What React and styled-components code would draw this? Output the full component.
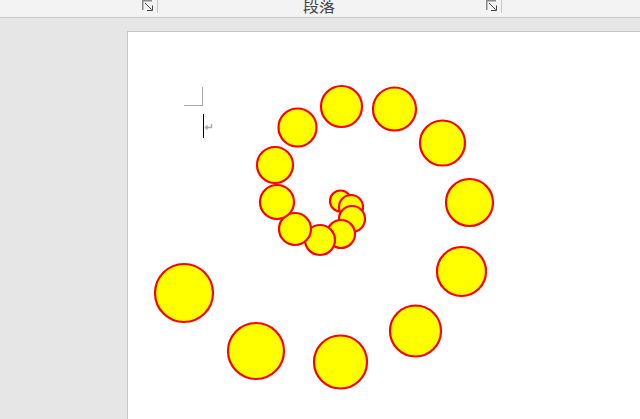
import React from "react";
import styled, { createGlobalStyle } from "styled-components";

const GlobalStyle = createGlobalStyle`
  html, body {
    margin: 0;
    padding: 0;
    height: 100%;
    background: #e6e6e6;
    overflow: hidden;
  }
`;

const Window = styled.div`
  width: 640px;
  height: 419px;
  display: flex;
  flex-direction: column;
  overflow: hidden;
`;

const Ribbon = styled.div`
  display: flex;
  flex: none;
  height: 17px;
  background: #f3f3f3;
  border-bottom: 1px solid #c6c6c6;
  overflow: hidden;
`;

const RibbonGroup = styled.div`
  box-sizing: border-box;
  display: flex;
  flex: none;
  justify-content: center;
  align-items: flex-end;
  position: relative;
  width: ${(p) => p.$width}px;
  height: 13px;
  padding-right: 21px;
  border-right: 1px solid #c6c6c6;
`;

const GroupLabel = styled.span`
  font-family: "Noto Sans CJK SC", sans-serif;
  font-size: 16px;
  line-height: 18px;
  margin-bottom: -1px;
  color: #444;
`;

const Launcher = styled.svg`
  position: absolute;
  right: 3px;
  top: 0;
  width: 12px;
  height: 12px;
`;

const Workspace = styled.div`
  flex: 1;
  padding: 13px 0 0 127px;
  background: #e6e6e6;
  overflow: hidden;
`;

const Page = styled.div`
  position: relative;
  height: 400px;
  background: #fff;
  border-left: 1px solid #c6c6c6;
  border-top: 1px solid #c6c6c6;
`;

const CropMark = styled.div`
  position: absolute;
  left: 56px;
  top: 55px;
  width: 18px;
  height: 18px;
  border-right: 1px solid #a8a8a8;
  border-bottom: 1px solid #a8a8a8;
`;

const Caret = styled.div`
  position: absolute;
  left: 75px;
  top: 82px;
  width: 1px;
  height: 24px;
  background: #000;
`;

const ParagraphMark = styled.svg`
  position: absolute;
  left: 76px;
  top: 91px;
  width: 9px;
  height: 9px;
`;

const Drawing = styled.svg`
  position: absolute;
  left: 0;
  top: 0;
  width: 513px;
  height: 388px;
`;

// centre x, centre y, radius, in page coordinates, smallest drawn first
const circles = [
  [212.5, 169, 10.5],
  [223, 175, 12],
  [224, 187, 13],
  [213, 202, 14],
  [192, 208, 15],
  [167, 197, 16],
  [149, 170, 17],
  [147, 133, 18],
  [169.5, 95.5, 19],
  [213.5, 74.5, 20.5],
  [266.5, 77, 21.5],
  [314.5, 111, 22.5],
  [341.5, 170.5, 23.5],
  [333.5, 239.5, 24.5],
  [287.5, 299, 25.5],
  [212.5, 330, 26.5],
  [128, 319, 28],
  [56, 261, 29],
];

const LauncherIcon = () => (
  <Launcher viewBox="0 0 12 12" fill="none">
    <path d="M0.75 10V0.75H10" stroke="#8a8a8a" strokeWidth="1.5" />
    <path d="M3 3L9.5 9.5M5 10.5H10.5V5.5" stroke="#444" strokeWidth="1" />
  </Launcher>
);

export default function App() {
  return (
    <Window>
      <GlobalStyle />
      <Ribbon>
        <RibbonGroup $width={158}>
          <LauncherIcon />
        </RibbonGroup>
        <RibbonGroup $width={344}>
          <GroupLabel>段落</GroupLabel>
          <LauncherIcon />
        </RibbonGroup>
      </Ribbon>
      <Workspace>
        <Page>
          <CropMark />
          <Caret />
          <ParagraphMark viewBox="0 0 9 9" fill="none">
            <path d="M7.5 1V4.5H1.5M3.5 2.5L1.5 4.5L3.5 6.5" stroke="#aaa" strokeWidth="1.5" />
          </ParagraphMark>
          <Drawing viewBox="0 0 513 388">
            {circles.map(([cx, cy, r]) => (
              <circle key={`${cx}-${cy}`} cx={cx} cy={cy} r={r} fill="#ff0" stroke="#f00" strokeWidth="2.2" />
            ))}
          </Drawing>
        </Page>
      </Workspace>
    </Window>
  );
}
